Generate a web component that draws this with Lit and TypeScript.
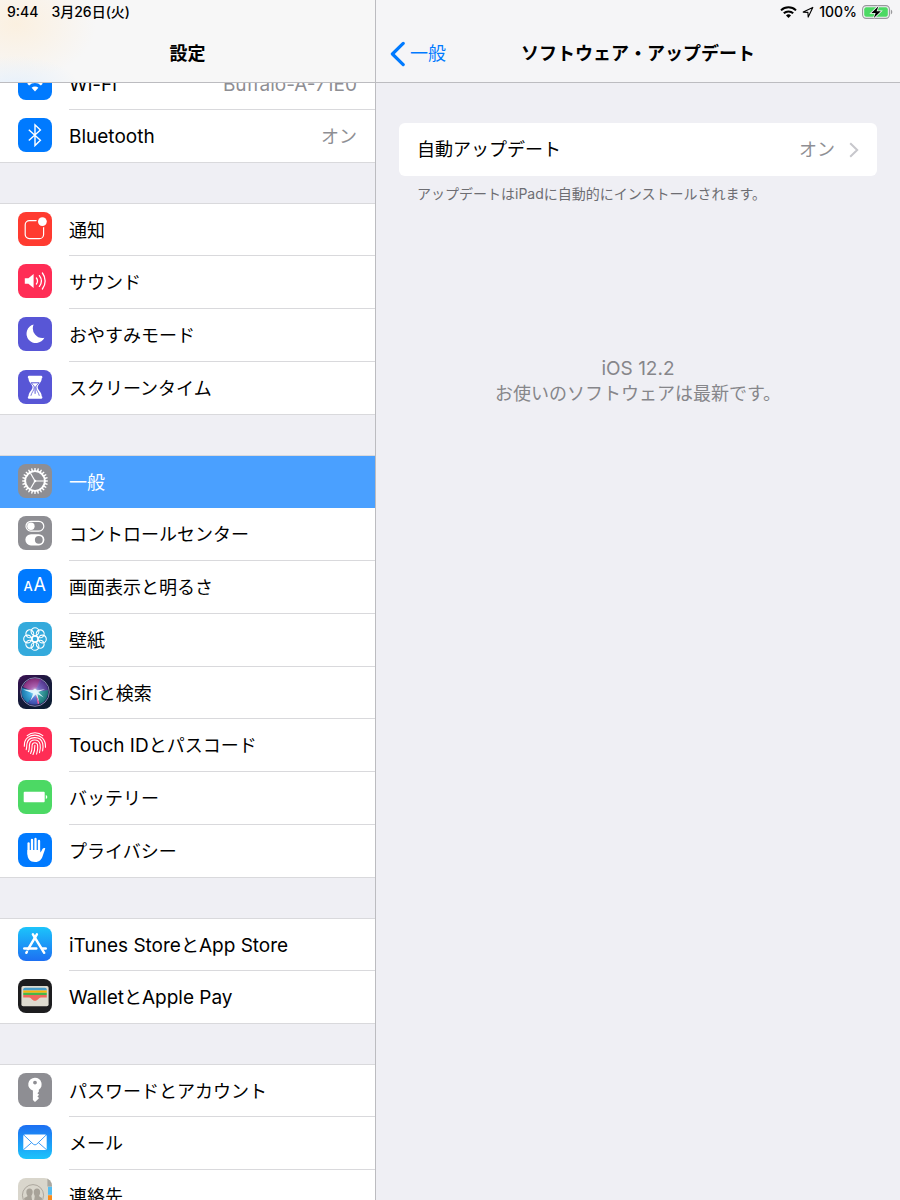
import { LitElement, css, html, svg, nothing } from "lit";
import type { SVGTemplateResult } from "lit";
import { customElement, property, state } from "lit/decorators.js";
import { classMap } from "lit/directives/class-map.js";

type SettingsItem = {
  id: string;
  label: string;
  value?: string;
};

const GROUPS: SettingsItem[][] = [
  [
    { id: "wifi", label: "Wi-Fi", value: "Buffalo-A-71E0" },
    { id: "bluetooth", label: "Bluetooth", value: "オン" },
  ],
  [
    { id: "notifications", label: "通知" },
    { id: "sound", label: "サウンド" },
    { id: "dnd", label: "おやすみモード" },
    { id: "screentime", label: "スクリーンタイム" },
  ],
  [
    { id: "general", label: "一般" },
    { id: "control", label: "コントロールセンター" },
    { id: "display", label: "画面表示と明るさ" },
    { id: "wallpaper", label: "壁紙" },
    { id: "siri", label: "Siriと検索" },
    { id: "touchid", label: "Touch IDとパスコード" },
    { id: "battery", label: "バッテリー" },
    { id: "privacy", label: "プライバシー" },
  ],
  [
    { id: "store", label: "iTunes StoreとApp Store" },
    { id: "wallet", label: "WalletとApple Pay" },
  ],
  [
    { id: "passwords", label: "パスワードとアカウント" },
    { id: "mail", label: "メール" },
    { id: "contacts", label: "連絡先" },
  ],
];

// 等間隔の角度を作る
const angles = (count: number): number[] =>
  Array.from({ length: count }, (_, i) => (360 / count) * i);

// 欧文は和文より小さく見えるので、欧文部分だけ span で包んで少し大きくする
const mixedText = (text: string) =>
  text
    .split(/([ -~]+)/)
    .filter((part) => part !== "")
    .map((part) => (/^[ -~]/.test(part) ? html`<span class="latin">${part}</span>` : part));

// アイコンの背景色（グラデーションは defs 側で定義）
const FILLS: Record<string, string> = {
  wifi: "#007aff",
  bluetooth: "#007aff",
  notifications: "#ff3b30",
  sound: "#ff2d55",
  dnd: "#5856d6",
  screentime: "#5856d6",
  general: "#8e8e93",
  control: "#8e8e93",
  display: "#007aff",
  wallpaper: "#34aadc",
  siri: "url(#siri-bg)",
  touchid: "#ff2d55",
  battery: "#4cd964",
  privacy: "#007aff",
  store: "url(#store-bg)",
  wallet: "#1d1d1f",
  passwords: "#8e8e93",
  mail: "url(#mail-bg)",
  contacts: "#d9d6cc",
};

const GLYPHS: Record<string, SVGTemplateResult> = {
  wifi: svg`
    <g fill="none" stroke="#fff" stroke-width="2.6">
      <path d="M6.5 14.5a15 15 0 0 1 21 0" />
      <path d="M10.2 18.6a9.6 9.6 0 0 1 13.6 0" />
    </g>
    <path d="M17 25.4l-3.4-3.6a4.800 4.800 0 0 1 6.800 0z" fill="#fff" />
  `,
  bluetooth: svg`
    <path d="M10.8 11.8l11.6 10.4-5.4 5.4V6.8l5.4 5.2-11.6 10.4"
      fill="none" stroke="#fff" stroke-width="1.4" />
  `,
  notifications: svg`
    <rect x="7.2" y="8.6" width="18.4" height="18" rx="4.2" fill="none" stroke="#fff" stroke-width="1.2" />
    <circle cx="24.4" cy="9.6" r="6" fill="#ff3b30" />
    <circle cx="24.4" cy="9.6" r="4.4" fill="#fff" />
  `,
  sound: svg`
    <path d="M6.8 14.2h3.6l5.2-4.200v14l-5.200-4.200H6.800z" fill="#fff" />
    <g fill="none" stroke="#fff" stroke-width="1.3" stroke-linecap="round">
      <path d="M18.400 14a5 5 0 0 1 0 6" />
      <path d="M21.400 11.600a9 9 0 0 1 0 10.800" />
      <path d="M24.400 9a13 13 0 0 1 0 16" />
    </g>
  `,
  dnd: svg`
    <path d="M15.6 7.6a9.4 9.4 0 1 0 10.8 13.2A9.7 9.7 0 0 1 15.6 7.6z" fill="#fff" />
  `,
  screentime: svg`
    <path d="M11 5.8h12.2a1.4 1.4 0 0 1 .5 2.6c0 4.200-4 5.800-4 8.900s4 4.700 4 8.900a1.400 1.400 0 0 1-.5 2.600H11a1.400 1.400 0 0 1-.5-2.600c0-4.200 4-5.800 4-8.900s-4-4.700-4-8.900A1.400 1.400 0 0 1 11 5.800z" fill="#fff" />
    <path d="M13 12.800h8.200M17.100 16.500v7.300" fill="none" stroke="#5856d6" stroke-width="1" />
    <path d="M13 12.800c1.300 1.700 3.200 2.200 3.200 4.600 0 3.300-2.800 5-3.300 8.400M21.200 12.800c-1.300 1.700-3.200 2.200-3.200 4.600 0 3.300 2.800 5 3.300 8.400" fill="none" stroke="#5856d6" stroke-width=".8" />
  `,
  general: svg`
    <circle cx="17" cy="17" r="9.8" fill="none" stroke="#fff" stroke-width="1.8" />
    ${angles(24).map(
      (a) => svg`<path d="M26.6 16.1l3.4.3v1.2l-3.4.3z" fill="#fff" transform="rotate(${a} 17 17)" />`,
    )}
    ${[0, 120, 240].map(
      (a) => svg`<path d="M17 17h9" stroke="#fff" stroke-width="1.2" transform="rotate(${a} 17 17)" />`,
    )}
    <circle cx="17" cy="17" r="1.3" fill="#fff" />
  `,
  control: svg`
    <rect x="8" y="5.3" width="17.8" height="9.8" rx="4.9" fill="none" stroke="#fff" stroke-width="1.2" />
    <circle cx="12.9" cy="10.2" r="3.7" fill="#fff" />
    <rect x="7.4" y="18.2" width="19" height="11.2" rx="5.6" fill="#fff" />
    <circle cx="20.8" cy="23.8" r="3.9" fill="#8e8e93" />
  `,
  display: svg`
    <text x="5.4" y="22.4" font-size="13" font-weight="500" fill="#fff">A</text>
    <text x="15.6" y="22.4" font-size="18" fill="#fff">A</text>
  `,
  wallpaper: svg`
    <g fill="none" stroke="#fff" stroke-width="1.1">
      ${angles(8).map(
        (a) => svg`<circle cx="17" cy="9.6" r="3.9" transform="rotate(${a} 17 17)" />`,
      )}
      <circle cx="17" cy="17" r="2.800" />
    </g>
  `,
  siri: svg`
    <circle cx="17" cy="17" r="14" fill="#232a66" />
    <path d="M17 17L5 12A13 13 0 0 1 24 5z" fill="#d32f96" opacity=".8" />
    <path d="M17 17L22 4a13 13 0 0 1 8 12z" fill="#7a3fb8" opacity=".8" />
    <path d="M17 17L4 13a13 13 0 0 0 6 15z" fill="#18a4dc" opacity=".9" />
    <path d="M17 17l13-2a13 13 0 0 1-8 14z" fill="#17ab8c" opacity=".8" />
    <path d="M17 17l-7 11a13 13 0 0 0 10 1z" fill="#4456d0" opacity=".9" />
    <circle cx="17" cy="17" r="14" fill="url(#siri-glow)" />
    <path d="M17 13.600l2.200 1.600 7.800-.9-6.800 2.800 5.600 5.400-6.400-3.500 1.900 8.500-3.800-8-5.300 6.400 3-7.500L5 14.600l10 .5z" fill="#e8fbff" opacity=".9" />
    <path d="M18 19.500l3.400 8.800-1.600 1z" fill="#ff5fa8" />
    <circle cx="17" cy="17" r="14.300" fill="none" stroke="#8f8db4" stroke-width=".9" />
  `,
  touchid: svg`
    <g fill="none" stroke="#fff" stroke-width="1.1" stroke-linecap="round">
      <path d="M9.2 8.6a12 12 0 0 1 15.600 0" />
      <path d="M6.300 19.200c-.2-4.800 1.500-7.200 3.600-8.800 4.300-3.200 10.200-3 14 .3 2.600 2.300 3.800 5.300 3.600 9.500" />
      <path d="M8.200 22.600c.7-2.600.4-3.600.7-5.600 1.200-8.200 13.700-8.600 15.800-.5.6 2.500.4 4.800-.1 7.400" />
      <path d="M10.400 24.800c1.300-2.900.8-5 1.100-7.200.8-5.900 9.300-6.100 10.600-.3.700 3.100.1 5.800-.6 8.400" />
      <path d="M12.600 26.400c1.800-3.300 1.300-5.700 1.500-8.200.4-3.200 4.900-3.400 5.500-.2.5 3-.1 6.300-1 9.100" />
      <path d="M15 27.500c1.700-3 1.900-6.200 1.900-9.300" />
    </g>
  `,
  battery: svg`
    <rect x="5.7" y="11.8" width="21" height="10.400" rx=".9" fill="#fff" />
    <path d="M27.800 15q1.500.5 1.500 2t-1.500 2z" fill="#fff" />
  `,
  privacy: svg`
    <g fill="none" stroke="#fff" stroke-width="2.3" stroke-linecap="round">
      <path d="M10.600 10.500V21" />
      <path d="M14 7v12" />
      <path d="M17.500 6v12" />
      <path d="M21 8v12" />
    </g>
    <path d="M9.450 17h12.700v2.600c1-.7 1.700-2.300 2.300-3.500.6-1 1.500-1.400 2.800-1-.3 2.500-1.500 4.700-2.400 7.300-1.200 4-3.300 6.500-7.700 6.500-5.300 0-7.700-3.400-7.700-8z" fill="#fff" />
  `,
  store: svg`
    <g fill="none" stroke="#fff" stroke-width="2.5" stroke-linecap="round">
      <path d="M18.900 7.300l-8.800 14.900" />
      <path d="M8.900 24.800l-.6 1" />
      <path d="M14.900 7.300l11.300 18.500" />
      <path d="M6.300 21.600h12" />
      <path d="M24.500 21.600h3.200" />
    </g>
  `,
  wallet: svg`
    <rect x="3.400" y="7" width="27.200" height="20.200" rx="1.800" fill="#dedbd0" />
    <path d="M5.200 10.600q0-1.800 1.800-1.800h20q1.800 0 1.800 1.800v1H5.200z" fill="#4a9fcb" />
    <path d="M5.200 11.400h23.600v2.400H5.200z" fill="#fdb306" />
    <path d="M5.200 13.700h23.600v2.400H5.200z" fill="#47b649" />
    <path d="M5.200 16h23.600v2.400h-6c-2 0-3 3.400-5.800 3.400s-3.800-3.400-5.800-3.400h-6z" fill="#f0685d" />
  `,
  passwords: svg`
    <path fill-rule="evenodd" d="M17 4.700a6.600 6.600 0 0 1 3.800 12v2l-1.400 1.500 1.700 1.600-1.700 1.600 1.700 1.700-1.900 1.800L17 29l-2.100-1.900V17.600A6.600 6.600 0 0 1 17 4.700zm0 3a1.900 1.900 0 1 0 0 3.800 1.900 1.900 0 0 0 0-3.800z" fill="#fff" />
  `,
  mail: svg`
    <rect x="5.300" y="9.400" width="23.400" height="15.600" rx="1.500" fill="#fff" />
    <g fill="none" stroke="#2b95f8" stroke-width=".9">
      <path d="M5.600 9.800l9.700 9.400q1.700 1.500 3.400 0l9.700-9.400" />
      <path d="M5.600 24.600l8-7" />
      <path d="M28.400 24.600l-8-7" />
    </g>
  `,
  contacts: svg`
    <path d="M29.400 0h4.600v8.600h-4.600z" fill="#aaa79f" />
    <path d="M30 8.800h4v8h-4z" fill="#55bdf0" />
    <path d="M30 17.300h4v8h-4z" fill="#f88b1c" />
    <path d="M30 26h4v8h-4z" fill="#73c33f" />
    <circle cx="15" cy="17.200" r="10.600" fill="none" stroke="#a7a298" stroke-width=".9" />
    <g fill="#a7a298">
      <path d="M11.600 10.400c2.300 0 3.300 1.800 3 4.300-.2 1.500-.8 2.300-1.200 3.300l1.200 7.500H8.200q-2-1.700-2-5.500c1.300-.8 3-1.100 3.400-2-.5-1-1.100-1.800-1.200-3.300-.3-2.500.9-4.300 3.200-4.300z" />
      <path d="M19 10.400c2.300 0 3.400 1.800 3.100 4.300-.1 1.500-.7 2.300-1.100 3.300.4.900 2 1.200 3 2q0 3.800-2 5.500h-6.400l1.200-7.500c-.5-1-.9-1.800-1-3.300-.3-2.500.9-4.300 3.200-4.300z" />
    </g>
  `,
};

/** 角丸の設定アイコン */
@customElement("settings-icon")
class SettingsIcon extends LitElement {
  static styles = css`
    :host {
      display: block;
      width: 34px;
      height: 34px;
      border-radius: 8px;
      overflow: hidden;
    }

    svg {
      display: block;
      font-family: Inter, "Liberation Sans", sans-serif;
    }
  `;

  @property() name = "";

  render() {
    return html`
      <svg width="34" height="34" viewBox="0 0 34 34" aria-hidden="true">
        <defs>
          <linearGradient id="store-bg" x1="0" y1="0" x2="0" y2="1">
            <stop offset="0" stop-color="#1cc4fb" />
            <stop offset="1" stop-color="#1d6ff2" />
          </linearGradient>
          <linearGradient id="mail-bg" x1="0" y1="0" x2="0" y2="1">
            <stop offset="0" stop-color="#1d6ff2" />
            <stop offset="1" stop-color="#1cc4fb" />
          </linearGradient>
          <linearGradient id="siri-bg" x1="0" y1="0" x2="0.6" y2="1">
            <stop offset="0" stop-color="#3d1055" />
            <stop offset="0.5" stop-color="#191a3c" />
            <stop offset="1" stop-color="#0c1c33" />
          </linearGradient>
          <radialGradient id="siri-glow">
            <stop offset="0" stop-color="#ffffff" stop-opacity="0.9" />
            <stop offset="0.4" stop-color="#9fd8ff" stop-opacity="0.3" />
            <stop offset="1" stop-color="#10163c" stop-opacity="0.3" />
          </radialGradient>
        </defs>
        <rect width="34" height="34" fill=${FILLS[this.name] ?? "#8e8e93"} />
        ${GLYPHS[this.name] ?? nothing}
      </svg>
    `;
  }
}

@customElement("app-root")
class AppRoot extends LitElement {
  static styles = css`
    :host {
      --color-bg: #efeff4;
      --color-line: #d9d9dc;
      --color-bar-line: #bcbcc0;
      --color-tint: #007aff;
      --color-secondary: #8e8e93;
      --font-size-small: 14px;
      --font-size-body: 18px;
      --font-size-latin: 19px;

      display: grid;
      grid-template-columns: 376px 1fr;
      height: 100vh;
      background: var(--color-bg);
      color: #000;
      font-family: Inter, "Noto Sans CJK JP", sans-serif;
      font-size: var(--font-size-body);
      line-height: 24px;
    }

    * {
      box-sizing: border-box;
    }

    button {
      border: 0;
      margin: 0;
      padding: 0;
      background: none;
      color: inherit;
      font: inherit;
      text-align: left;
      cursor: pointer;
    }

    .latin {
      font-size: var(--font-size-latin);
    }

    .pane {
      display: flex;
      flex-direction: column;
      min-width: 0;
      min-height: 0;
    }

    .sidebar {
      border-right: 1px solid var(--color-bar-line);
    }

    .bar {
      flex: none;
      border-bottom: 1px solid var(--color-bar-line);
      background: #f5f5f7;
    }

    /* 背後の壁紙がうっすら透けるヘッダー */
    .sidebar .bar {
      background:
        radial-gradient(ellipse 64px 32px at 16px 88px, #e6f0fb, transparent),
        radial-gradient(ellipse 80px 56px at 16px 24px, #fbf0e0, transparent),
        #f7f7f7;
    }

    .status {
      display: flex;
      align-items: center;
      height: 24px;
      padding: 0 7px;
      font-size: var(--font-size-small);
      font-weight: 500;
    }

    .status.start {
      gap: 13px;
    }

    .status.end {
      justify-content: flex-end;
      gap: 5px;
    }

    .status svg {
      display: block;
    }

    .title-row {
      display: grid;
      grid-template-columns: 1fr auto 1fr;
      align-items: center;
      height: 58px;
      padding: 2px 14px 0;
    }

    h1,
    h2 {
      grid-column: 2;
      margin: 0;
      font-size: var(--font-size-body);
      font-weight: 600;
    }

    .back {
      justify-self: start;
      display: flex;
      align-items: center;
      gap: 5px;
      color: var(--color-tint);
    }

    .list {
      flex: 1;
      min-height: 0;
      overflow-y: auto;
      scrollbar-width: none;
      display: flex;
      flex-direction: column;
      gap: 40px;
      padding-bottom: 40px;
    }

    .group {
      flex: none;
      border-top: 1px solid var(--color-line);
      background: #fff;
    }

    .row {
      display: flex;
      align-items: flex-start;
      gap: 17px;
      width: 100%;
      height: 53px;
      padding-left: 18px;

      &:nth-child(4n + 1) {
        height: 52px;
      }

      &:last-child {
        border-bottom: 1px solid var(--color-line);
      }

      &:last-child .row-body {
        border-bottom: 0;
      }

      &.selected {
        background: #4aa0ff;
        color: #fff;
      }

      &.selected .row-body {
        border-color: transparent;
      }
    }

    settings-icon {
      flex: none;
      margin-top: 8px;
    }

    .row-body {
      flex: 1;
      align-self: stretch;
      display: flex;
      align-items: center;
      justify-content: space-between;
      padding: 2px 18px 0 0;
      border-bottom: 1px solid var(--color-line);
    }

    .value {
      color: var(--color-secondary);
    }

    .content {
      padding: 40px 23px;
    }

    .card {
      display: flex;
      align-items: center;
      justify-content: space-between;
      width: 100%;
      height: 53px;
      padding: 0 18px;
      border-radius: 6px;
      background: #fff;
    }

    .card .value {
      display: flex;
      align-items: center;
      gap: 14px;
    }

    .note {
      margin: 6px 18px 0;
      color: #6d6d72;
      font-size: var(--font-size-small);
    }

    .version {
      margin: 150px 0 0;
      color: #86868a;
      line-height: 25px;
      text-align: center;
    }
  `;

  @state() private selected = "general";

  firstUpdated() {
    // Wi-Fi の行がヘッダーに半分隠れた位置から始める
    this.renderRoot.querySelector(".list")!.scrollTop = 26;
  }

  private select(id: string) {
    this.selected = id;
  }

  private renderRow(item: SettingsItem) {
    const selected = item.id === this.selected;
    return html`
      <button
        class=${classMap({ row: true, selected })}
        type="button"
        aria-current=${selected ? "page" : nothing}
        @click=${() => this.select(item.id)}
      >
        <settings-icon name=${item.id}></settings-icon>
        <span class="row-body">
          <span>${mixedText(item.label)}</span>
          ${item.value ? html`<span class="value">${mixedText(item.value)}</span>` : nothing}
        </span>
      </button>
    `;
  }

  private renderStatusIcons() {
    return html`
      <svg width="17" height="12" viewBox="0 0 17 12" aria-hidden="true">
        <g fill="none" stroke="#000" stroke-width="2">
          <path d="M1 4.4a10.800 10.800 0 0 1 15 0" />
          <path d="M3.800 7.300a6.800 6.800 0 0 1 9.400 0" />
        </g>
        <path d="M8.500 12L6 9.400a3.600 3.600 0 0 1 5 0z" />
      </svg>
      <svg width="12" height="12" viewBox="0 0 12 12" aria-hidden="true">
        <path d="M1.200 6.100l9.600-4.700-4.600 9.700-.3-4.700z" fill="none" stroke="#000" stroke-width="1.100" stroke-linejoin="round" />
      </svg>
      <span>100%</span>
      <svg width="31" height="14" viewBox="0 0 31 14" aria-hidden="true">
        <rect x=".6" y=".6" width="26.800" height="12.800" rx="3.600" fill="none" stroke="#98989c" stroke-width="1.100" />
        <rect x="2.200" y="2.200" width="23.600" height="9.600" rx="2" fill="#4cd964" />
        <path d="M28.800 4.600q1.500.6 1.500 2.400t-1.500 2.400z" fill="#98989c" />
        <path d="M16.400 1.200L9.400 7.900h4.200l-1.800 5 7-6.700h-4.200z" fill="#000" stroke="#f5f5f7" stroke-width="1.600" paint-order="stroke" />
      </svg>
    `;
  }

  render() {
    return html`
      <aside class="pane sidebar">
        <header class="bar">
          <div class="status start">
            <span>9:44</span>
            <span>3月26日(火)</span>
          </div>
          <div class="title-row"><h1>設定</h1></div>
        </header>
        <nav class="list" aria-label="設定">
          ${GROUPS.map(
            (group) => html`<div class="group">${group.map((item) => this.renderRow(item))}</div>`,
          )}
        </nav>
      </aside>

      <main class="pane">
        <header class="bar">
          <div class="status end">${this.renderStatusIcons()}</div>
          <div class="title-row">
            <button class="back" type="button">
              <svg width="15" height="26" viewBox="0 0 15 26" aria-hidden="true">
                <path d="M13.200 2.400L2.400 13l10.800 10.600" fill="none" stroke="currentColor" stroke-width="3.200" stroke-linecap="round" stroke-linejoin="round" />
              </svg>
              <span>一般</span>
            </button>
            <h2>ソフトウェア・アップデート</h2>
          </div>
        </header>
        <div class="content">
          <button class="card" type="button">
            <span>自動アップデート</span>
            <span class="value">
              オン
              <svg width="10" height="16" viewBox="0 0 10 16" aria-hidden="true">
                <path d="M1.200 1.200L8.200 8l-7 6.800" fill="none" stroke="#c7c7cc" stroke-width="2" />
              </svg>
            </span>
          </button>
          <p class="note">アップデートはiPadに自動的にインストールされます。</p>
          <p class="version">${mixedText("iOS 12.2")}<br />お使いのソフトウェアは最新です。</p>
        </div>
      </main>
    `;
  }
}
